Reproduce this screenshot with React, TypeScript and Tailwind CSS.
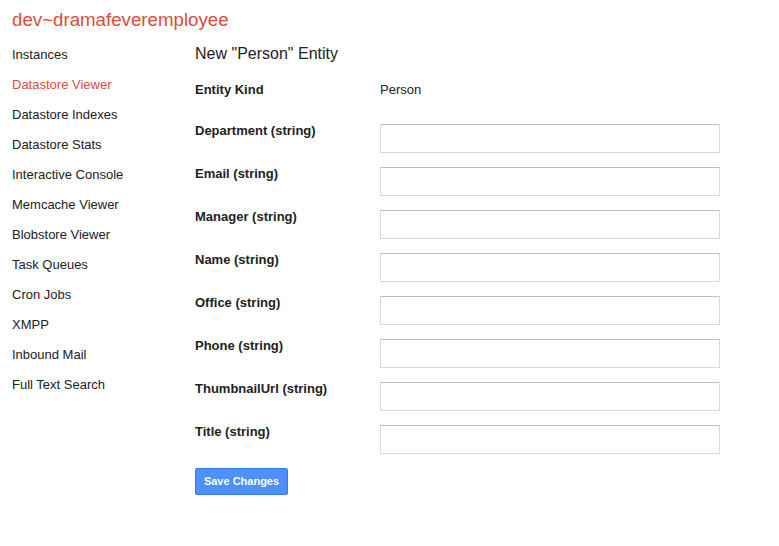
import React from 'react';

const navItems = [
  'Instances',
  'Datastore Viewer',
  'Datastore Indexes',
  'Datastore Stats',
  'Interactive Console',
  'Memcache Viewer',
  'Blobstore Viewer',
  'Task Queues',
  'Cron Jobs',
  'XMPP',
  'Inbound Mail',
  'Full Text Search',
];

const fields = [
  'Department',
  'Email',
  'Manager',
  'Name',
  'Office',
  'Phone',
  'ThumbnailUrl',
  'Title',
];

const App: React.FC = () => {
  return (
    <div className="min-h-screen bg-white text-[#222] font-['Liberation_Sans',Arial,sans-serif]">
      {/* Заголовок приложения */}
      <div className="pt-2 pl-3 h-8">
        <h1 className="text-[18.7px] leading-6 text-[#dd4b39]">dev~dramafeveremployee</h1>
      </div>

      <div className="flex">
        {/* Боковое меню */}
        <ul className="w-[195px] pl-3 mt-[8px]">
          {navItems.map(item => (
            <li
              key={item}
              className={`text-[13px] leading-[30px] ${
                item === 'Datastore Viewer' ? 'text-[#dd4b39]' : 'text-[#222]'
              }`}
            >
              {item}
            </li>
          ))}
        </ul>

        {/* Форма сущности */}
        <div className="flex-1 mt-[12px]">
          <h2 className="text-[16px] leading-5 mb-[18px]">New "Person" Entity</h2>

          <div className="flex h-[41px]">
            <div className="w-[185px] text-[13px] leading-4 font-bold">Entity Kind</div>
            <div className="text-[13px] leading-4">Person</div>
          </div>

          {fields.map(field => (
            <div key={field} className="flex items-start h-[43px]">
              <label className="w-[185px] text-[13px] leading-4 font-bold">{field} (string)</label>
              <input
                type="text"
                className="mt-[1px] w-[340px] h-[29px] border border-[#d9d9d9] border-t-[#c0c0c0] bg-white px-2 text-[13px] outline-none"
              />
            </div>
          ))}

          <button
            type="submit"
            className="mt-[1px] w-[93px] h-[27px] rounded-[2px] border border-[#3079ed] bg-[#4d90fe] text-white text-[11px] font-bold"
          >
            Save Changes
          </button>
        </div>
      </div>
    </div>
  );
};

export default App;
